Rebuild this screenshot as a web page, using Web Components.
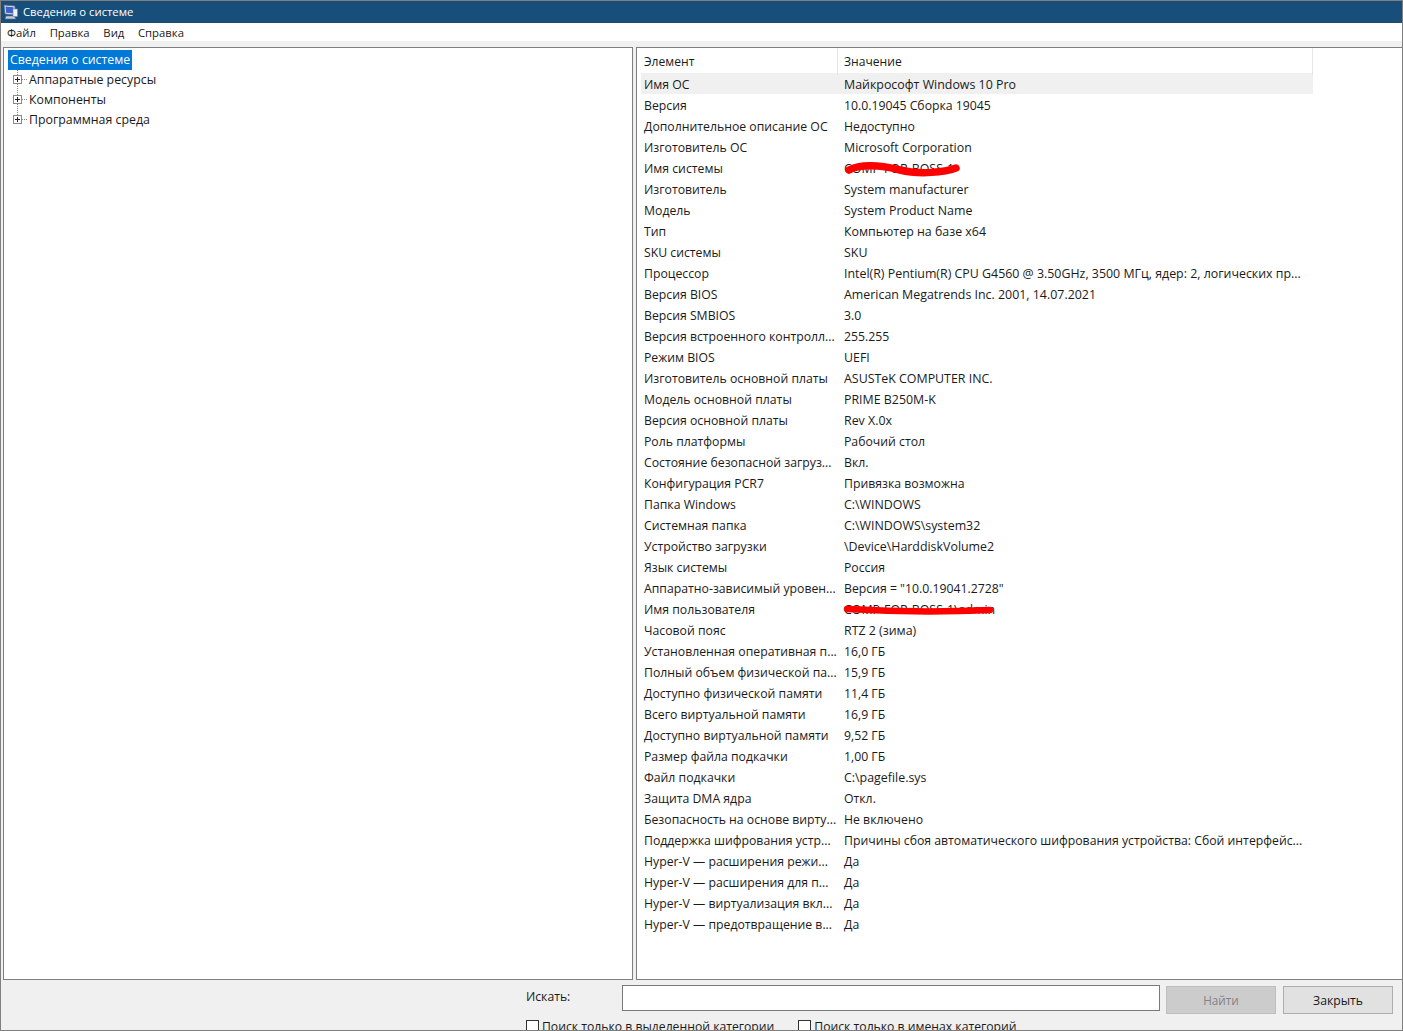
<!DOCTYPE html>
<html lang="ru">
<head>
<meta charset="utf-8">
<title>Сведения о системе</title>
<style>
  html, body { margin: 0; height: 100%; overflow: hidden; background: #f0f0f0; }
  body { font: 12.4px "Open Sans", "Noto Sans", sans-serif; color: #1a1a1a; }
</style>
</head>
<body>
<msi-window>
  <msi-titlebar slot="title">Сведения о системе</msi-titlebar>
  <msi-menu slot="menu"></msi-menu>
  <msi-tree slot="tree"></msi-tree>
  <msi-table slot="table"></msi-table>
  <msi-search slot="search"></msi-search>
</msi-window>

<script>
const rows = [
  ["Имя ОС", "Майкрософт Windows 10 Pro"],
  ["Версия", "10.0.19045 Сборка 19045"],
  ["Дополнительное описание ОС", "Недоступно"],
  ["Изготовитель ОС", "Microsoft Corporation"],
  ["Имя системы", "COMP-FOR-BOSS-1"],
  ["Изготовитель", "System manufacturer"],
  ["Модель", "System Product Name"],
  ["Тип", "Компьютер на базе x64"],
  ["SKU системы", "SKU"],
  ["Процессор", "Intel(R) Pentium(R) CPU G4560 @ 3.50GHz, 3500 МГц, ядер: 2, логических пр..."],
  ["Версия BIOS", "American Megatrends Inc. 2001, 14.07.2021"],
  ["Версия SMBIOS", "3.0"],
  ["Версия встроенного контролл...", "255.255"],
  ["Режим BIOS", "UEFI"],
  ["Изготовитель основной платы", "ASUSTeK COMPUTER INC."],
  ["Модель основной платы", "PRIME B250M-K"],
  ["Версия основной платы", "Rev X.0x"],
  ["Роль платформы", "Рабочий стол"],
  ["Состояние безопасной загруз...", "Вкл."],
  ["Конфигурация PCR7", "Привязка возможна"],
  ["Папка Windows", "C:\\WINDOWS"],
  ["Системная папка", "C:\\WINDOWS\\system32"],
  ["Устройство загрузки", "\\Device\\HarddiskVolume2"],
  ["Язык системы", "Россия"],
  ["Аппаратно-зависимый уровен...", "Версия = \"10.0.19041.2728\""],
  ["Имя пользователя", "COMP-FOR-BOSS-1\\admin"],
  ["Часовой пояс", "RTZ 2 (зима)"],
  ["Установленная оперативная п...", "16,0 ГБ"],
  ["Полный объем физической па...", "15,9 ГБ"],
  ["Доступно физической памяти", "11,4 ГБ"],
  ["Всего виртуальной памяти", "16,9 ГБ"],
  ["Доступно виртуальной памяти", "9,52 ГБ"],
  ["Размер файла подкачки", "1,00 ГБ"],
  ["Файл подкачки", "C:\\pagefile.sys"],
  ["Защита DMA ядра", "Откл."],
  ["Безопасность на основе вирту...", "Не включено"],
  ["Поддержка шифрования устр...", "Причины сбоя автоматического шифрования устройства: Сбой интерфейс..."],
  ["Hyper-V — расширения режи...", "Да"],
  ["Hyper-V — расширения для п...", "Да"],
  ["Hyper-V — виртуализация вкл...", "Да"],
  ["Hyper-V — предотвращение в...", "Да"]
];

class MsiWindow extends HTMLElement {
  constructor() {
    super();
    this.attachShadow({ mode: "open" }).innerHTML = `
      <style>
        :host { display: flex; flex-direction: column; height: 1031px; box-sizing: border-box;
          border: 1px solid #7f7f7f; border-bottom: 0; overflow: hidden; background: #f0f0f0; }
        .panes { display: flex; gap: 3px; height: 933px; padding: 0 0 0 2px; flex: none; }
        ::slotted([slot=tree]) { width: 630px; }
        ::slotted([slot=table]) { flex: 1; }
        .bottom { flex: 1; min-height: 0; border-bottom: 1px solid #7f7f7f; overflow: hidden; }
      </style>
      <slot name="title"></slot>
      <slot name="menu"></slot>
      <div class="panes"><slot name="tree"></slot><slot name="table"></slot></div>
      <div class="bottom"><slot name="search"></slot></div>`;
  }
}

class MsiTitlebar extends HTMLElement {
  constructor() {
    super();
    this.attachShadow({ mode: "open" }).innerHTML = `
      <style>
        :host { display: flex; align-items: center; gap: 4px; height: 22px; padding: 0 0 1px 2px; box-sizing: border-box;
          background: #174f7a; color: #fff; flex: none; font-size: 11.3px; }
        svg { width: 16px; height: 16px; flex: none; }
      </style>
      <svg viewBox="0 0 16 16">
        <path d="M1 1l11 1v9L2 10z" fill="#dfe6f3" stroke="#56648a" stroke-width=".8"/>
        <path d="M2.5 2.6l8 .7v6.3l-7.4-.8z" fill="#3a62c8"/>
        <path d="M3 12h8l2 3H2z" fill="#c6ccd9" stroke="#56648a" stroke-width=".6"/>
        <rect x="10" y="5" width="4.5" height="7.5" fill="#eef1f8" stroke="#7d86a0" stroke-width=".6"/>
      </svg>
      <span><slot></slot></span>`;
  }
}

class MsiMenu extends HTMLElement {
  constructor() {
    super();
    this.attachShadow({ mode: "open" }).innerHTML = `
      <style>
        :host { display: flex; height: 18px; align-items: center; gap: 13.7px; padding-left: 6px; margin-bottom: 6px;
          background: #fff; flex: none; font-size: 11.3px; }
      </style>
      <span>Файл</span><span>Правка</span><span>Вид</span><span>Справка</span>`;
  }
}

class MsiTree extends HTMLElement {
  constructor() {
    super();
    const plus = `<svg width="9" height="9" viewBox="0 0 9 9"><rect x=".5" y=".5" width="8" height="8" fill="#fff" stroke="#8a8a8a"/><path d="M2 4.5h5M4.5 2v5" stroke="#222"/></svg>`;
    const item = t => `<div class="item"><span class="exp">${plus}<i></i></span>${t}</div>`;
    this.attachShadow({ mode: "open" }).innerHTML = `
      <style>
        :host { display: block; box-sizing: border-box; background: #fff; border: 1px solid #7f7f7f; padding: 2px 4px; }
        .root { width: fit-content; background: #0078d7; color: #fff; height: 20px; line-height: 19px; padding: 0 2px; font-size: 12.3px; }
        .list { position: relative; margin-top: -1px; }
        .list::before { content: ""; position: absolute; left: 9px; top: 1px; height: 49px; border-left: 1px dotted #8a8a8a; }
        .item { display: flex; align-items: center; height: 20px; padding-left: 5px; position: relative; font-size: 12.35px; }
        .exp { display: inline-flex; align-items: center; width: 16px; position: relative; }
        .exp i { width: 5px; border-top: 1px dotted #8a8a8a; }
        svg { flex: none; position: relative; background: #fff; }
      </style>
      <div class="root">Сведения о системе</div>
      <div class="list">${item("Аппаратные ресурсы")}${item("Компоненты")}${item("Программная среда")}</div>`;
  }
}

class MsiRow extends HTMLElement {
  connectedCallback() {
    if (this.shadowRoot) return;
    const noLatin = !/[A-Za-z]/.test(this.textContent);
    this.attachShadow({ mode: "open" }).innerHTML = `
      <style>
        :host { display: grid; grid-template-columns: 200px 1fr; height: 21px; line-height: 23px; padding-left: 3px; white-space: nowrap; }
        :host([first]) { background: #f0f0f0; }
        .name { font-size: 12.25px; }
        .plain { font-size: 12.25px; }
      </style>
      <span class="name">${this.getAttribute("name")}</span><span class="${noLatin ? "plain" : ""}"><slot></slot></span>`;
  }
}

class MsiTable extends HTMLElement {
  constructor() {
    super();
    const root = this.attachShadow({ mode: "open" });
    root.innerHTML = `
      <style>
        :host { display: block; box-sizing: border-box; background: #fff; border: 1px solid #7f7f7f; border-right: 0; padding-left: 4px; position: relative; overflow: hidden; }
        .inner { width: 672px; }
        .head { display: grid; grid-template-columns: 197px 1fr; height: 25px; line-height: 27px; font-size: 12.1px; }
        .head span { padding-left: 3px; border-right: 1px solid #e5e5e5; }
        .head span + span { padding-left: 6px; }
        svg { position: absolute; left: 0; top: 0; pointer-events: none; }
      </style>
      <div class="inner">
        <div class="head"><span>Элемент</span><span>Значение</span></div>
        <div id="rows"></div>
      </div>
      <svg width="767" height="932" fill="none" stroke="#f00" stroke-linecap="round">
        <path d="M212 122 C223 116 243 117 263 122 S308 124 319 120" stroke-width="7.5"/>
        <path d="M210 561 C260 564 310 564 353 562" stroke-width="6.5"/>
      </svg>`;
    const box = root.getElementById("rows");
    rows.forEach((r, i) => {
      const row = document.createElement("msi-row");
      row.setAttribute("name", r[0]);
      if (i === 0) row.setAttribute("first", "");
      row.textContent = r[1];
      box.appendChild(row);
    });
  }
}

class MsiSearch extends HTMLElement {
  constructor() {
    super();
    this.attachShadow({ mode: "open" }).innerHTML = `
      <style>
        :host { display: block; padding: 5px 9px 0 525px; font-size: 12.2px; }
        .line { display: flex; align-items: flex-start; height: 34px; }
        .label { width: 96px; line-height: 24px; }
        .input { width: 538px; height: 26px; box-sizing: border-box; background: #fff; border: 1px solid #7a7a7a; }
        button { font: inherit; width: 110px; height: 28px; margin: 1px 0 0 6px; box-sizing: border-box; border: 1px solid #adadad; background: #e1e1e1; color: #1a1a1a; padding: 0; }
        button + button { margin-left: 7px; }
        button[disabled] { background: #ccc; border-color: #bfbfbf; color: #838383; font-size: 11.7px; }
        .checks { display: flex; gap: 24px; height: 14px; }
        label { display: flex; align-items: center; gap: 3px; white-space: nowrap; }
        .box { width: 13px; height: 13px; box-sizing: border-box; border: 1px solid #333; background: #fff; }
      </style>
      <div class="line">
        <span class="label">Искать:</span>
        <div class="input"></div>
        <button disabled>Найти</button>
        <button>Закрыть</button>
      </div>
      <div class="checks">
        <label><span class="box"></span>Поиск только в выделенной категории</label>
        <label><span class="box"></span>Поиск только в именах категорий</label>
      </div>`;
  }
}

customElements.define("msi-window", MsiWindow);
customElements.define("msi-titlebar", MsiTitlebar);
customElements.define("msi-menu", MsiMenu);
customElements.define("msi-tree", MsiTree);
customElements.define("msi-row", MsiRow);
customElements.define("msi-table", MsiTable);
customElements.define("msi-search", MsiSearch);
</script>
</body>
</html>
